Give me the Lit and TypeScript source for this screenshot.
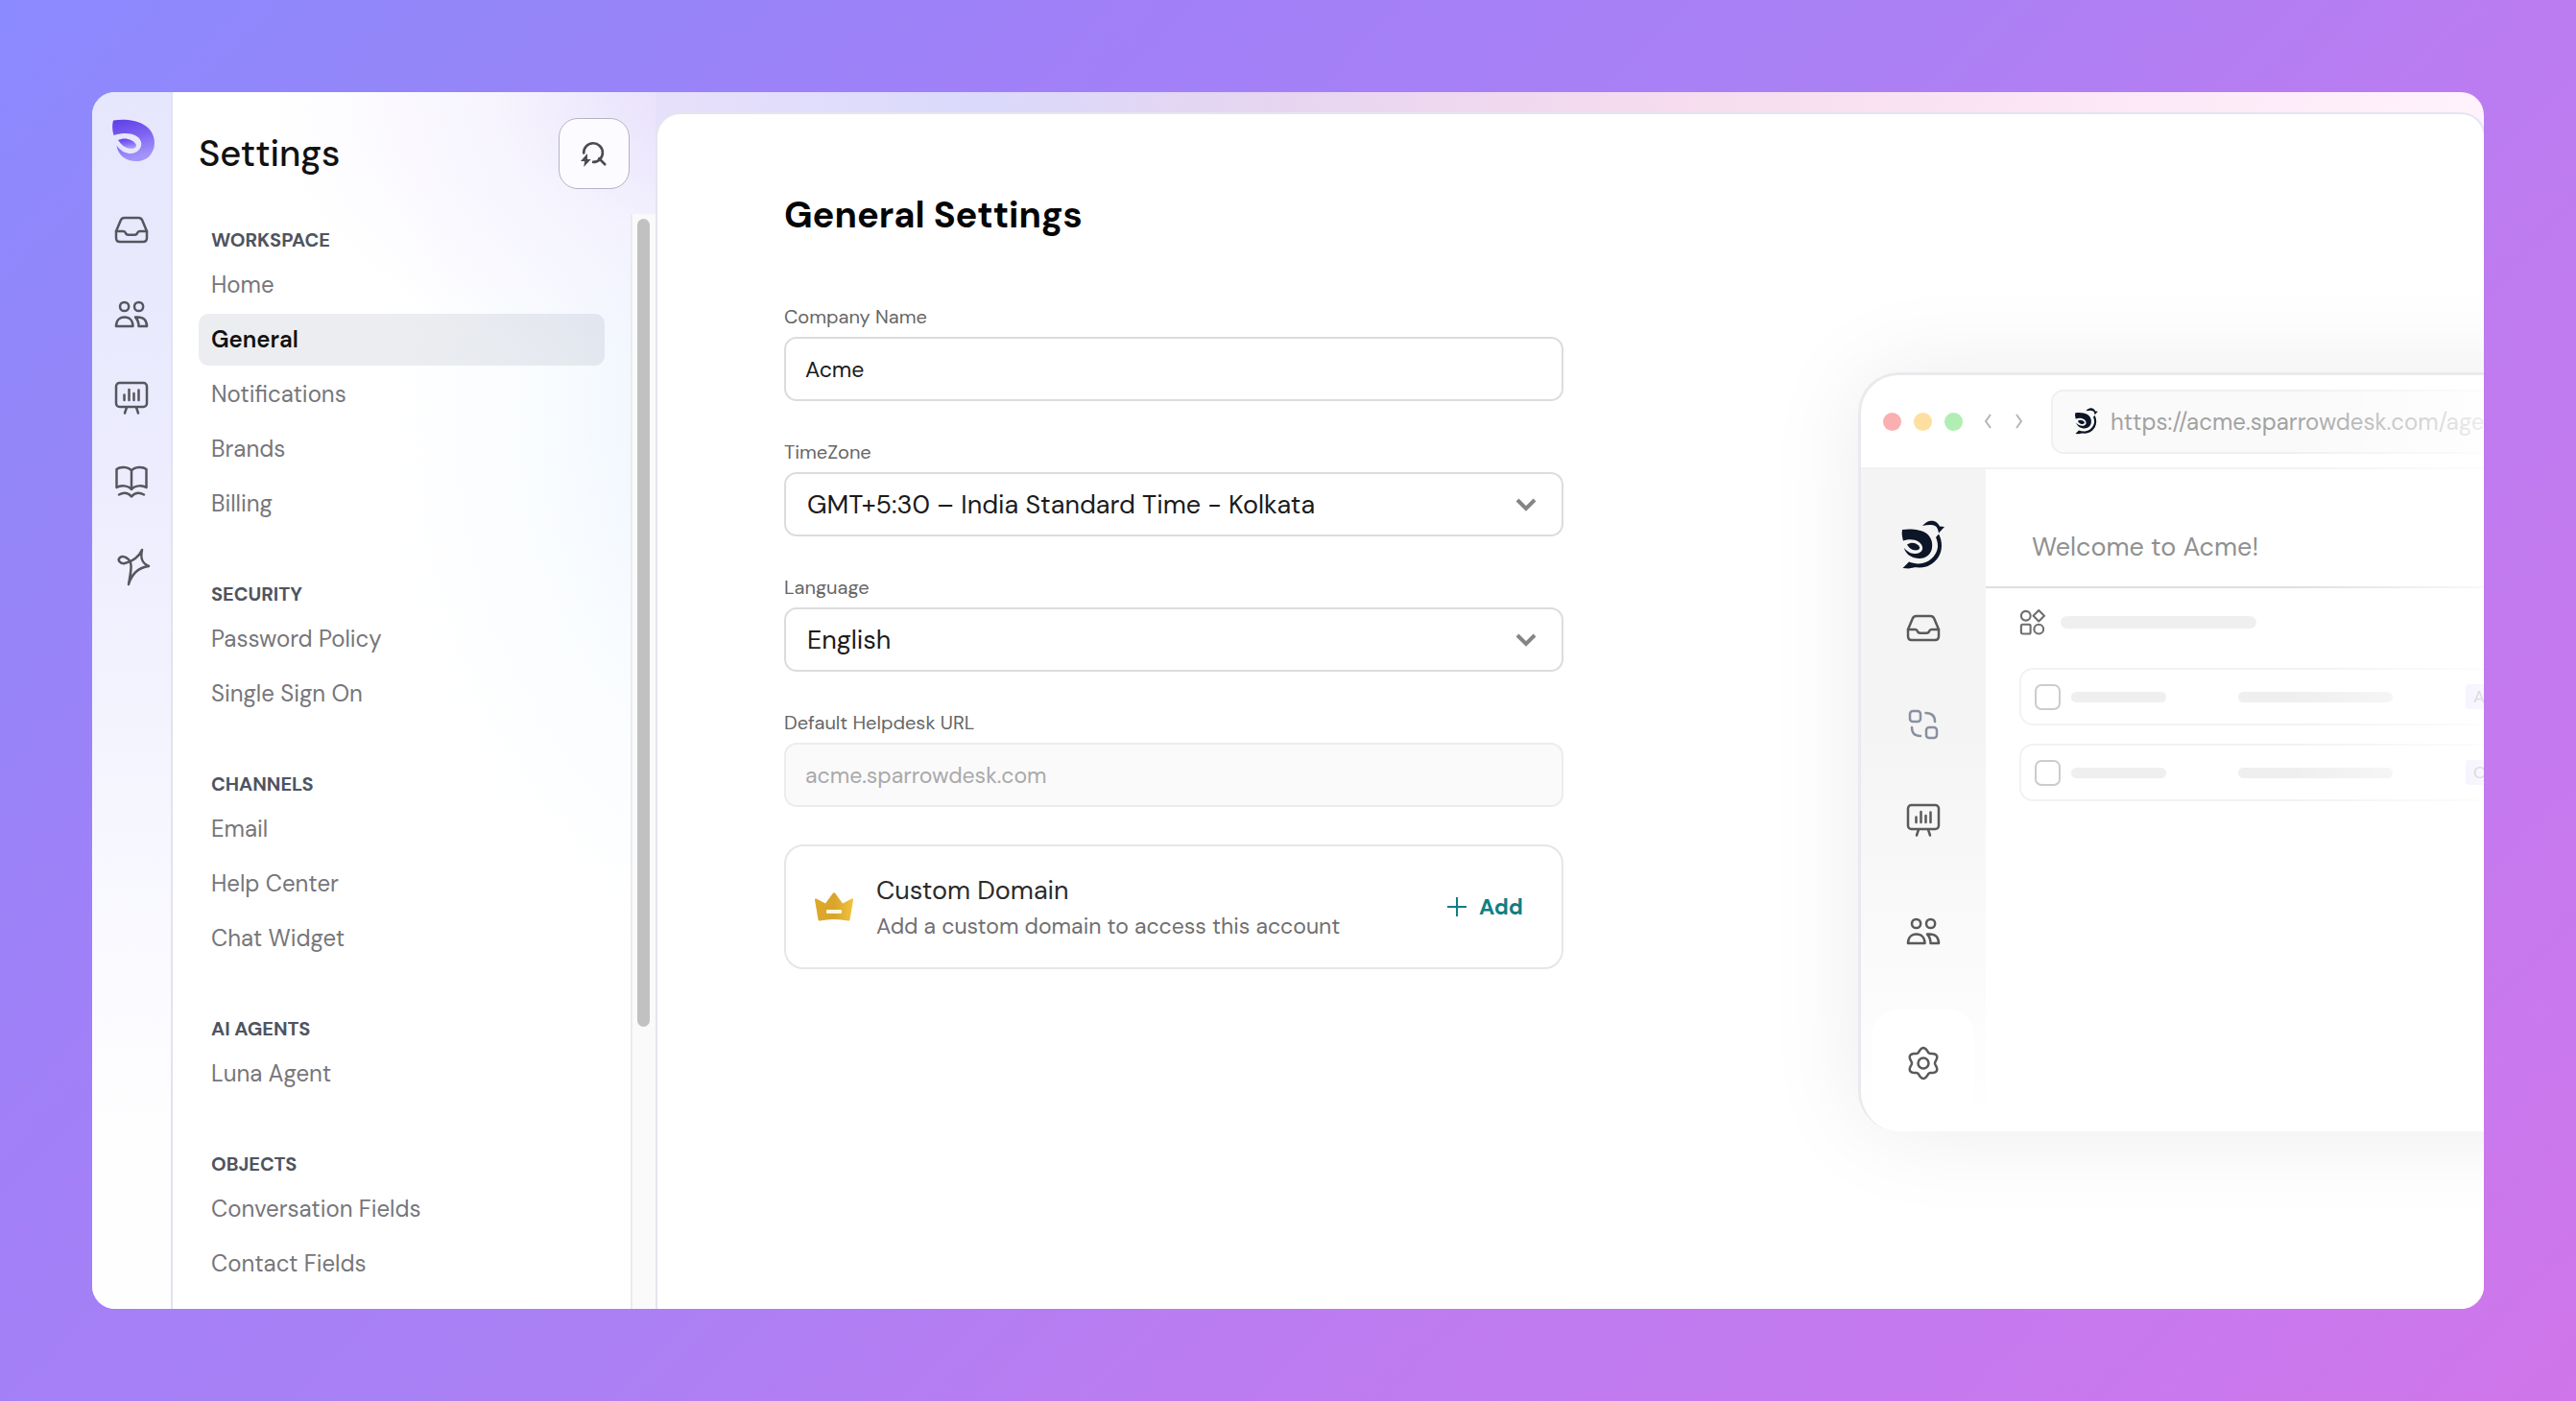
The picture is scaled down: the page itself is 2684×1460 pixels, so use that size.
import { LitElement, html, css, svg } from "lit";
import { customElement, state } from "lit/decorators.js";
import { classMap } from "lit/directives/class-map.js";

const gearOutline = Array.from({ length: 90 }, (_, i) => {
  const a = (i / 90) * Math.PI * 2;
  const r = 14 + 2 * Math.cos(6 * a);
  return `${i ? "L" : "M"}${(18 + r * Math.sin(a)).toFixed(2)} ${(18 - r * Math.cos(a)).toFixed(2)}`;
}).join("") + "Z";

const glyphs = {
  inbox: svg`<path d="M2 20 6.8 8.5Q8 6 10.500 6h15Q28 6 29.200 8.500L34 20v7q0 4-4 4H6q-4 0-4-4Z"/><path d="M2 20h7.500q1.800 0 2.300 1.700.6 2 2.700 2h7q2.100 0 2.700-2 .5-1.700 2.300-1.700H34"/>`,
  users: svg`<circle cx="10.600" cy="10.500" r="4.600"/><circle cx="25.600" cy="10.500" r="4.600"/><path d="M2 31c0-6 3.500-9.500 8.700-9.500s8.800 3.500 8.800 9.500Z"/><path d="M22 21.500h2.500c6 0 9.500 3.500 9.500 9.500h-8.500c0-4-1-7-3.500-9.500Z"/>`,
  chart: svg`<rect x="2" y="2" width="32" height="25" rx="3.500"/><path d="M10.500 14.500v5.500M15.500 9v11M20.500 13v7M25.500 9.500v10.500M13 27.500l-2 6M23 27.500l2 6"/>`,
  book: svg`<path d="M18 5.500C15 1 6 1 2.500 4v19c4-2.500 12-2.500 15.500 2 3.500-4.500 11.500-4.500 15.500-2V4C30 1 21 1 18 5.500Zm0 0V25"/><path d="M5 30.500c4.500-2.500 9.500-2 13 2 3.500-4 8.500-4.500 13-2"/>`,
  spark: svg`<path d="M29 0c-2 9 0 14 7 17-11 1.500-18 9-21 19 1.500-9 3-15 2.500-20C17 9 9.500 5.500 6 8 3 10.500 6 15 11 14c8-1.500 15-7 18-14Z"/>`,
  swap: svg`<rect x="4" y="4" width="11" height="11" rx="3"/><rect x="21" y="21" width="11" height="11" rx="3"/><path d="M20.500 6c6 0 9.500 3 9.500 9M6 21c0 6 3 9 9 9"/>`,
  gear: svg`<path d=${gearOutline}/><circle cx="18" cy="18" r="5.500"/>`,
  shapes: svg`<circle cx="9" cy="9" r="6.500"/><path d="M27 1.400 34.600 9 27 16.600 19.400 9Z" stroke-linejoin="round"/><rect x="2.500" y="21" width="13" height="13" rx="2"/><circle cx="27" cy="27.500" r="6.500"/>`,
};

type Glyph = keyof typeof glyphs;
const icon = (name: Glyph, cls = "icon") =>
  html`<svg class=${cls} viewBox="0 0 36 36" aria-hidden="true">${glyphs[name]}</svg>`;

const bird = (cls: string) => html`
  <svg class=${cls} viewBox="0 0 46 52" aria-hidden="true">
    <path d="M22 6C26 1 30 0 34 1c3.500 1 5 3.500 6 5.500l5 .5-6 6.500C38.500 11 38 8 36 6.500 32 4 27 5 22 6Z"/>
    <path d="M1 10c9-1.500 19 0 24 3 6 4 8 10 7 16-1 7-7 11.500-14 11-9-.500-14-6-15-11 4 5 8 6 12 6s8-3 7-7C21 22 12 18 2 21.500Q0 15 1 10Z"/>
    <path d="M6 25.500c5-3.500 11-1.500 13 2.500 1 3-3 4-7 3-3-1-4.500-3-6-5.500Z"/>
    <path d="M39 14.500c4 7.500 4 16.500 0 23.500-5 8-13 12-21 11.500-4-.5-7 .5-10 1L1.500 50 8 43.500c4 1.500 9 2.500 14 1.500 9-2 15-9 16-17 0-5-1-8-2-10Z"/>
  </svg>`;

@customElement("settings-rail")
class SettingsRail extends LitElement {
  static styles = css`
    :host { display: block; }
    .rail {
      box-sizing: border-box; width: 84px; height: 100%; padding: 28px 0;
      display: flex; flex-direction: column; align-items: center;
      border-right: 2px solid #e2e2f2;
      background: linear-gradient(#e6e6fd, #ececfe 30%, #f7f7ff 62%, #fefeff 85%);
    }
    .logo { width: 50px; height: 44px; margin-bottom: 27px; }
    .link {
      display: grid; place-items: center; width: 80px; height: 88px; padding: 0;
      border: 0; background: none; color: #55565e; cursor: pointer;
    }
    .icon { width: 36px; height: 36px; overflow: visible; fill: none; stroke: currentColor; stroke-width: 2.5; stroke-linecap: round; stroke-linejoin: round; }
  `;
  render() {
    const items: [Glyph, string][] = [["inbox", "Inbox"], ["users", "Contacts"], ["chart", "Reports"], ["book", "Knowledge base"], ["spark", "Assistant"]];
    return html`
      <nav class="rail" aria-label="Main">
        <svg class="logo" viewBox="-5 0 50 44" aria-hidden="true">
          <defs><linearGradient id="g" x1="0" y1="0" x2=".3" y2="1">
            <stop offset="0" stop-color="#5f3ce8"/><stop offset=".5" stop-color="#7d62f0"/><stop offset="1" stop-color="#a394fb"/>
          </linearGradient></defs>
          <path fill="url(#g)" d="M1 1.500C18-1.500 44 3 44 25c0 11-8 19-18.500 19C14 44 6 38 4.500 27.500 9 34 14.500 36 19.500 36 26 36 30.500 31 30.300 25.500 29.500 17 18 12 1.500 17Q-1 9 1 1.500Z"/>
          <path fill="url(#g)" d="M6 22c6-3.500 16-1 18.700 4.500C26 30 21.500 31.500 17 30.500 12 29.500 9 26 6 22Z"/>
        </svg>
        ${items.map(([g, label]) => html`<button class="link" aria-label=${label}>${icon(g)}</button>`)}
      </nav>`;
  }
}

@customElement("settings-menu")
class SettingsMenu extends LitElement {
  @state() private current = "General";
  private groups = [
    { title: "WORKSPACE", items: ["Home", "General", "Notifications", "Brands", "Billing"] },
    { title: "SECURITY", items: ["Password Policy", "Single Sign On"] },
    { title: "CHANNELS", items: ["Email", "Help Center", "Chat Widget"] },
    { title: "AI AGENTS", items: ["Luna Agent"] },
    { title: "OBJECTS", items: ["Conversation Fields", "Contact Fields"] },
  ];
  static styles = css`
    :host { display: block; }
    .menu { display: flex; flex-direction: column; height: 100%; }
    .head { display: flex; align-items: center; justify-content: space-between; padding: 27px 27px 26px; }
    .title { margin: 0; font-size: 38px; line-height: 48px; font-weight: 500; color: #111; }
    .search {
      display: grid; place-items: center; width: 74px; height: 74px; padding: 0; border-radius: 20px;
      border: 1px solid #b4b3c6; background: #fcfbff; color: #4b4b50; cursor: pointer;
    }
    .search-icon { width: 30px; height: 30px; fill: none; stroke: currentColor; stroke-width: 2.8; stroke-linecap: round; }
    .bolt { fill: currentColor; stroke: none; }
    .body { flex: 1; display: flex; }
    .list { flex: 1; padding: 7px 27px 0; display: flex; flex-direction: column; gap: 47px; }
    .group { display: flex; flex-direction: column; gap: 3px; }
    .caption { margin: 0 0 -3px; padding-left: 13px; font-size: 20px; line-height: 40px; font-weight: 700; color: #4f545f; }
    .item {
      padding-left: 13px; border-radius: 10px; font-size: 24px; line-height: 54px; color: #76767a; text-decoration: none;
    }
    .active { background: rgba(40, 50, 80, 0.085); color: #111; font-weight: 600; }
    .track { box-sizing: border-box; width: 26px; padding: 5px 5px 14px; background: #fafafa; border-left: 2px solid #e9ebed; }
    .thumb { width: 13px; height: 75%; border-radius: 7px; background: #c1c1c1; }
  `;
  render() {
    return html`
      <div class="menu">
        <header class="head">
          <h1 class="title">Settings</h1>
          <button class="search" aria-label="Search">
            <svg class="search-icon" viewBox="0 0 32 32">
              <path d="M4.500 15.500A10.500 10.500 0 1 1 15 25.500M21.500 21.500 28 28"/>
              <path class="bolt" d="M8.500 16 1 24.500h4.500L4.500 31 12.500 22.500H8.500Z"/>
            </svg>
          </button>
        </header>
        <div class="body">
          <nav class="list" aria-label="Settings">
            ${this.groups.map((g) => html`
              <section class="group">
                <h2 class="caption">${g.title}</h2>
                ${g.items.map((name) => html`
                  <a href="#" class=${classMap({ item: true, active: name === this.current })}
                    @click=${(e: Event) => { e.preventDefault(); this.current = name; }}>${name}</a>`)}
              </section>`)}
          </nav>
          <div class="track"><div class="thumb"></div></div>
        </div>
      </div>`;
  }
}

@customElement("general-form")
class GeneralForm extends LitElement {
  static styles = css`
    :host { display: block; }
    .title { margin: 0 0 68px; font-size: 38px; line-height: 48px; font-weight: 700; color: #050505; }
    .form { display: flex; flex-direction: column; gap: 39px; }
    .field { display: flex; flex-direction: column; gap: 7px; }
    .label { font-size: 20px; line-height: 28px; color: #666; }
    .box {
      box-sizing: border-box; width: 100%; height: 67px; margin: 0; padding: 0 20px;
      border: 2px solid #dcdcde; border-radius: 13px; background: #fff;
      font-family: inherit; font-size: 23px; color: #1b1b1b; outline: none;
    }
    .box:disabled { background: #fafafa; border-color: #ececec; color: #a9a9ab; opacity: 1; }
    .pick { display: grid; grid-template-columns: 1fr 50px; align-items: center; }
    .select { grid-area: 1 / 1 / 2 / 3; appearance: none; padding: 0 60px 0 22px; font-size: 27px; }
    .chevron { grid-area: 1 / 2; width: 22px; height: 14px; fill: none; stroke: #858585; stroke-width: 4; pointer-events: none; }
    .card {
      box-sizing: border-box; min-height: 130px; display: flex; align-items: center; gap: 24px;
      padding: 24px 40px 24px 30px; border: 2px solid #e6e6e8; border-radius: 20px;
    }
    .crown { width: 40px; height: 30px; }
    .text { flex: 1; padding-top: 2px; }
    .name { margin: 0; font-size: 27px; line-height: 38px; font-weight: 400; color: #2b2b2b; }
    .note { margin: 0; font-size: 23px; line-height: 36px; color: #707070; }
    .add {
      display: flex; align-items: center; gap: 13px; padding: 0; border: 0; background: none; cursor: pointer;
      font-family: inherit; font-size: 23px; font-weight: 700; color: #0f7f86;
    }
    .plus { width: 20px; height: 20px; stroke: currentColor; stroke-width: 2; }
  `;
  private picker(id: string, label: string, value: string) {
    return html`
      <div class="field">
        <label class="label" for=${id}>${label}</label>
        <div class="pick">
          <select class="box select" id=${id}><option>${value}</option></select>
          <svg class="chevron" viewBox="0 0 22 14" aria-hidden="true"><path d="M2 2l9 9 9-9"/></svg>
        </div>
      </div>`;
  }
  render() {
    return html`
      <h2 class="title">General Settings</h2>
      <form class="form" @submit=${(e: Event) => e.preventDefault()}>
        <div class="field">
          <label class="label" for="company">Company Name</label>
          <input class="box" id="company" type="text" .value=${"Acme"} />
        </div>
        ${this.picker("zone", "TimeZone", "GMT+5:30 – India Standard Time - Kolkata")}
        ${this.picker("lang", "Language", "English")}
        <div class="field">
          <label class="label" for="url">Default Helpdesk URL</label>
          <input class="box" id="url" type="text" .value=${"acme.sparrowdesk.com"} disabled />
        </div>
        <div class="card">
          <svg class="crown" viewBox="0 0 40 30" aria-hidden="true">
            <defs><linearGradient id="c" x1="0" x2="1"><stop offset="0" stop-color="#dfa82a"/><stop offset=".5" stop-color="#d8a42c"/><stop offset="1" stop-color="#f2c43d"/></linearGradient></defs>
            <path fill="url(#c)" d="M1.500 6.500 11 11.500 18.500 1.200Q20-.8 21.500 1.200L29 11.500 38.500 6.500Q40.500 6 40 8L36.500 28.500Q36 30 34.500 29.500 20 26.500 5.500 29.500 4 30 3.500 28.500L0 8Q-.5 6 1.500 6.500Z"/>
            <rect x="12" y="18" width="16" height="4" rx="1" fill="#fff6df"/>
          </svg>
          <div class="text">
            <h3 class="name">Custom Domain</h3>
            <p class="note">Add a custom domain to access this account</p>
          </div>
          <button class="add" type="button">
            <svg class="plus" viewBox="0 0 20 20" aria-hidden="true"><path d="M10 0v20M0 10h20"/></svg>Add
          </button>
        </div>
      </form>`;
  }
}

@customElement("desk-preview")
class DeskPreview extends LitElement {
  static styles = css`
    :host { display: block; }
    .glow { width: 120%; border-radius: 42px 0 0 42px; box-shadow: 0 0 100px rgba(0, 0, 0, 0.08); }
    .browser {
      position: relative; box-sizing: border-box; min-height: 791px;
      display: flex; flex-direction: column; overflow: hidden;
      border: 3px solid #e9eaee; border-bottom: 0; border-radius: 42px 0 0 42px; background: #fff;
    }
    .bar { box-sizing: border-box; height: 98px; flex: none; display: flex; align-items: center; padding-left: 23px; border-bottom: 2px solid #f2f2f2; }
    .dots { display: flex; gap: 13px; margin-right: 18px; }
    .dot { width: 19px; height: 19px; border-radius: 50%; }
    .red { background: #fab0b0; }
    .amber { background: #fde0a0; }
    .green { background: #b0eeb4; }
    .arrows { display: flex; gap: 17px; margin-right: 25px; }
    .arrow { width: 16px; height: 16px; fill: none; stroke: #b5b5b5; stroke-width: 2; }
    .address {
      box-sizing: border-box; flex: 1; height: 67px; display: flex; align-items: center; gap: 12px; padding-left: 22px;
      border: 2px solid #f0f0f0; border-radius: 13px; background: #fafafa; font-size: 24px; color: #a2a2a2; white-space: nowrap;
    }
    .bird { width: 26px; height: 28px; fill: #0d1528; }
    .main { flex: 1; display: flex; }
    .side {
      box-sizing: border-box; width: 130px; padding-top: 53px; display: grid; justify-items: center; align-items: center;
      grid-template-rows: 52px 120px 82px 118px 112px 1fr; color: #5a5a5a;
      background: linear-gradient(#f4f4f4 38%, #fafafa 72%, #fff);
    }
    .bird-large { width: 46px; height: 52px; fill: #0d1528; }
    .icon { width: 36px; height: 36px; fill: none; stroke: currentColor; stroke-width: 2.5; stroke-linecap: round; stroke-linejoin: round; }
    .muted { color: #8890a2; display: grid; }
    .tile { display: grid; place-items: center; width: 107px; height: 112px; margin-top: 10px; border-radius: 28px; background: #fff; }
    .page { flex: 1; min-width: 0; }
    .welcome { margin: 0; padding: 62px 0 22px 48px; font-size: 27px; line-height: 38px; font-weight: 400; color: #909090; border-bottom: 2px solid #dedee2; }
    .list { padding: 22px 0 0 35px; display: grid; gap: 19px; }
    .toolbar { display: flex; align-items: center; gap: 16px; height: 26px; margin-bottom: 16px; }
    .shapes { width: 27px; height: 27px; fill: none; stroke: #6e6e6e; stroke-width: 2.8; }
    .line { height: 13px; border-radius: 7px; background: #efefef; }
    .wide { width: 204px; }
    .row { box-sizing: border-box; height: 60px; display: flex; align-items: center; padding-left: 14px; border: 2px solid #f2f2f2; border-radius: 14px; }
    .check { appearance: none; box-sizing: border-box; width: 27px; height: 27px; margin: 0 11px 0 0; border: 2px solid #ccc; border-radius: 7px; background: #fff; }
    .short { width: 99px; height: 11px; margin-right: 75px; }
    .long { width: 161px; height: 11px; margin-right: 76px; }
    .tag { padding: 0 8px; border-radius: 4px; background: #ddd6fc; font-size: 18px; line-height: 26px; color: #55556e; }
    .fade { position: absolute; inset: -3px 0 0; background: linear-gradient(to right, rgba(255, 255, 255, 0) 58%, #fff 90%); pointer-events: none; }
  `;
  render() {
    return html`
      <div class="glow"><div class="browser">
        <div class="bar">
          <div class="dots"><span class="dot red"></span><span class="dot amber"></span><span class="dot green"></span></div>
          <div class="arrows">
            <svg class="arrow" viewBox="0 0 16 16"><path d="M11 1 6 8l5 7"/></svg>
            <svg class="arrow" viewBox="0 0 16 16"><path d="M5 1l5 7-5 7"/></svg>
          </div>
          <div class="address">${bird("bird")}<span>https://acme.sparrowdesk.com/agent</span></div>
        </div>
        <div class="main">
          <div class="side">
            ${bird("bird-large")}
            ${icon("inbox")}
            <span class="muted">${icon("swap")}</span>
            ${icon("chart")}
            ${icon("users")}
            <span class="tile">${icon("gear")}</span>
          </div>
          <div class="page">
            <h3 class="welcome">Welcome to Acme!</h3>
            <div class="list">
              <div class="toolbar">${icon("shapes", "shapes")}<span class="line wide"></span></div>
              ${["A", "C"].map((tag) => html`
                <div class="row">
                  <input class="check" type="checkbox" aria-label="Select conversation" />
                  <span class="line short"></span><span class="line long"></span><span class="tag">${tag}</span>
                </div>`)}
            </div>
          </div>
        </div>
        <div class="fade"></div>
      </div></div>`;
  }
}

@customElement("app-root")
class AppRoot extends LitElement {
  static styles = css`
    :host {
      display: flex; box-sizing: border-box; min-height: 100vh; padding: 96px;
      font-family: "DM Sans", Inter, "Liberation Sans", sans-serif;
      background: linear-gradient(135deg, #8c8aff, #9386f9 12%, #a080f8 27%, #ac80f4 50%, #ba7cf1 63%, #cb78ed 92%, #d075ea);
    }
    .window {
      flex: 1; min-width: 0; display: grid; grid-template-columns: 84px 503px minmax(0, 1fr); overflow: hidden; border-radius: 24px;
      background:
        linear-gradient(to right, transparent 587px, #e7e0fb 587px, #dad9fb 37%, #e7d5f0 50%, #f6dcee 66%, #fce8f6 85%, #fff2fc) top / 100% 50px no-repeat,
        radial-gradient(480px 300px at 660px 0, rgba(228, 218, 250, 0.95), rgba(240, 234, 253, 0.5) 50%, rgba(255, 255, 255, 0) 100%),
        radial-gradient(440px 600px at 740px 330px, rgba(226, 238, 254, 0.9), rgba(240, 247, 255, 0.4) 60%, rgba(255, 255, 255, 0) 100%),
        #fff;
    }
    .panel {
      box-sizing: border-box; margin: 21px -2px 0 0; padding: 81px 2px 81px 132px; overflow: hidden;
      display: grid; grid-template-columns: minmax(0, 813fr) minmax(0, 651fr); column-gap: 307px; align-items: start;
      border: 2px solid #e4e5ee; border-bottom: 0; border-radius: 26px 26px 0 0; background: #fff;
    }
    .preview { margin-top: 188px; }
  `;
  render() {
    return html`
      <div class="window">
        <settings-rail></settings-rail>
        <settings-menu></settings-menu>
        <main class="panel">
          <general-form></general-form>
          <desk-preview class="preview"></desk-preview>
        </main>
      </div>`;
  }
}
